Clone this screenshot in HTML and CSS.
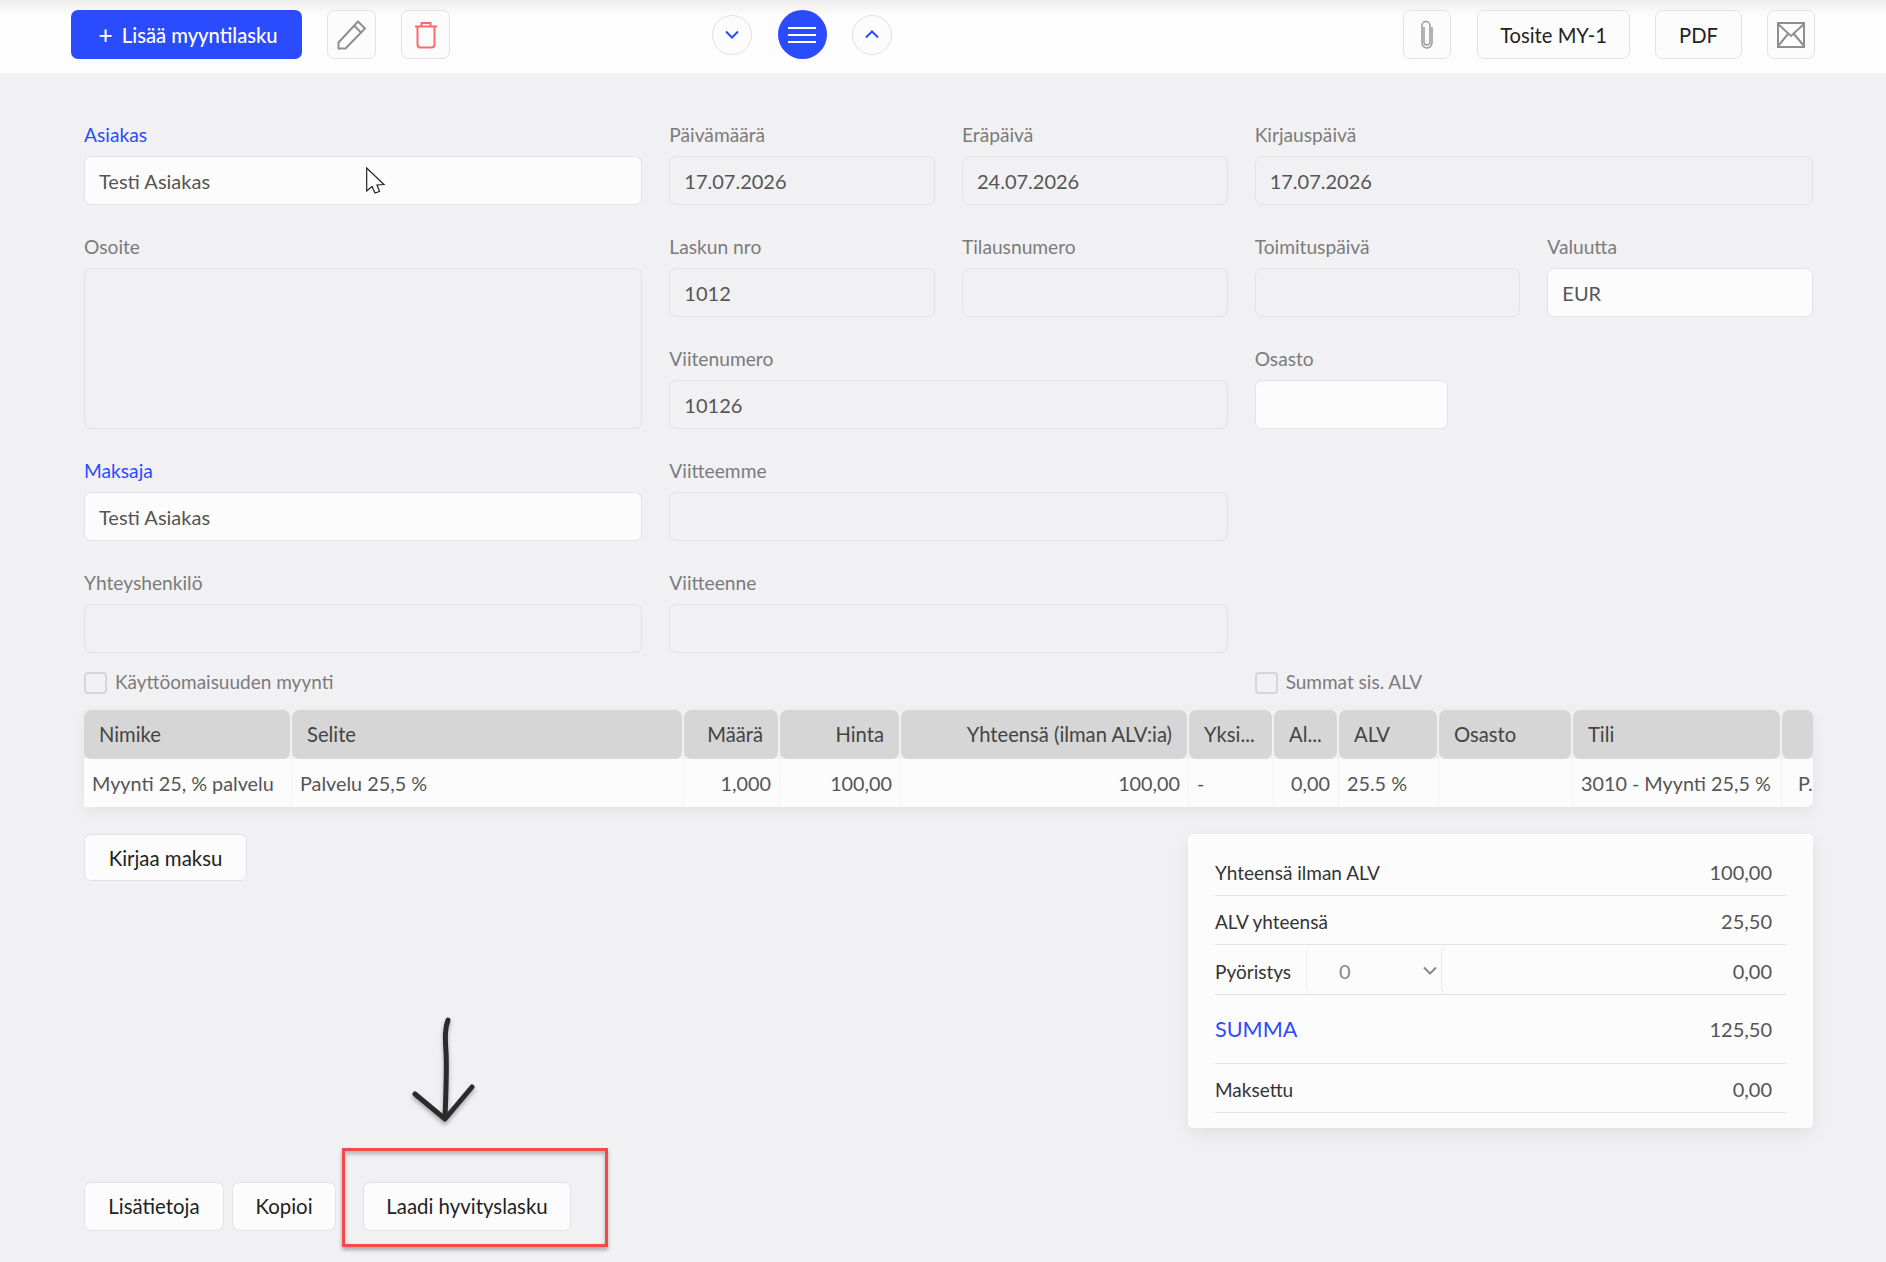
FILE: index.html
```html
<!DOCTYPE html>
<html lang="fi">
<head>
    <meta charset="UTF-8">
    <meta name="viewport" content="width=device-width, initial-scale=1.0">
    <title>Myyntilasku</title>
    <link rel="stylesheet" href="styles.css">
</head>
<body>
    <header class="topbar">
        <button class="btn btn-primary"><span class="plus">+</span> Lisää myyntilasku</button>
        <button class="btn btn-icon edit-btn">
            <svg width="30" height="30" viewBox="0 0 30 30" fill="none" stroke="#8e8e8e" stroke-width="2"><path d="M1.500 28.500v-6l19.500-21 7 7-19.500 20z"/><path d="M17 5.500l7 7"/></svg>
        </button>
        <button class="btn btn-icon delete-btn">
            <svg width="24" height="30" viewBox="0 0 24 30" fill="none" stroke="#f96a6a" stroke-width="2"><path d="M1 6.500h22"/><path d="M7.500 6.500V3h9v3.500"/><path d="M3.500 6.500v18a3 3 0 0 0 3 3h11a3 3 0 0 0 3-3v-18"/></svg>
        </button>

        <div class="pager">
            <button class="circle">
                <svg width="14" height="9" viewBox="0 0 14 9" fill="none" stroke="#2b4bff" stroke-width="2"><path d="M1 1.500l6 6 6-6"/></svg>
            </button>
            <button class="circle circle-main">
                <svg width="28" height="18" viewBox="0 0 28 18" fill="none" stroke="#fff" stroke-width="2"><path d="M0 2h28M0 9h28M0 16h28"/></svg>
            </button>
            <button class="circle">
                <svg width="14" height="9" viewBox="0 0 14 9" fill="none" stroke="#2b4bff" stroke-width="2"><path d="M1 7.500l6-6 6 6"/></svg>
            </button>
        </div>

        <div class="topbar-right">
            <button class="btn btn-clip">
                <svg width="16" height="30" viewBox="0 0 16 30" fill="none" stroke="#999" stroke-width="1.500"><path d="M5 7v15a3 3 0 0 0 6 0V5.500a4 4 0 0 0-8 0V23a5 5 0 0 0 10 0V7"/></svg>
            </button>
            <button class="btn btn-tosite">Tosite MY-1</button>
            <button class="btn btn-pdf">PDF</button>
            <button class="btn btn-clip">
                <svg width="28" height="26" viewBox="0 0 28 26" fill="none" stroke="#8e8e8e" stroke-width="2"><rect x="1" y="1" width="26" height="24"/><path d="M1 2l13 12L27 2M1 24l10-12M27 24L17 12"/></svg>
            </button>
        </div>
    </header>

    <main class="content">
        <div class="form-grid">
            <div class="field span-2">
                <label class="link-label">Asiakas</label>
                <div class="input">Testi Asiakas</div>
            </div>
            <div class="field">
                <label>Päivämäärä</label>
                <div class="input readonly">17.07.2026</div>
            </div>
            <div class="field">
                <label>Eräpäivä</label>
                <div class="input readonly">24.07.2026</div>
            </div>
            <div class="field span-2">
                <label>Kirjauspäivä</label>
                <div class="input readonly">17.07.2026</div>
            </div>

            <div class="field span-2 tall">
                <label>Osoite</label>
                <div class="input readonly"></div>
            </div>
            <div class="field">
                <label>Laskun nro</label>
                <div class="input readonly">1012</div>
            </div>
            <div class="field">
                <label>Tilausnumero</label>
                <div class="input readonly"></div>
            </div>
            <div class="field">
                <label>Toimituspäivä</label>
                <div class="input readonly"></div>
            </div>
            <div class="field">
                <label>Valuutta</label>
                <div class="input">EUR</div>
            </div>

            <div class="field span-2">
                <label>Viitenumero</label>
                <div class="input readonly">10126</div>
            </div>
            <div class="field span-2">
                <label>Osasto</label>
                <div class="input input-narrow"></div>
            </div>

            <div class="field span-2">
                <label class="link-label">Maksaja</label>
                <div class="input">Testi Asiakas</div>
            </div>
            <div class="field span-2">
                <label>Viitteemme</label>
                <div class="input readonly"></div>
            </div>
            <div class="field span-2 row-start">
                <label>Yhteyshenkilö</label>
                <div class="input readonly"></div>
            </div>
            <div class="field span-2">
                <label>Viitteenne</label>
                <div class="input readonly"></div>
            </div>
        </div>

        <div class="check-row">
            <div class="check span-4"><span class="checkbox"></span> Käyttöomaisuuden myynti</div>
            <div class="check span-2"><span class="checkbox"></span> Summat sis. ALV</div>
        </div>

        <div class="lines">
            <div class="th">Nimike</div>
            <div class="th">Selite</div>
            <div class="th right">Määrä</div>
            <div class="th right">Hinta</div>
            <div class="th right">Yhteensä (ilman ALV:ia)</div>
            <div class="th">Yksi...</div>
            <div class="th">Al...</div>
            <div class="th">ALV</div>
            <div class="th">Osasto</div>
            <div class="th">Tili</div>
            <div class="th"></div>

            <div class="td">Myynti 25, % palvelu</div>
            <div class="td">Palvelu 25,5 %</div>
            <div class="td right">1,000</div>
            <div class="td right">100,00</div>
            <div class="td right">100,00</div>
            <div class="td">-</div>
            <div class="td right">0,00</div>
            <div class="td">25.5 %</div>
            <div class="td"></div>
            <div class="td">3010 - Myynti 25,5 %</div>
            <div class="td td-last">P.</div>
        </div>

        <div class="lower">
            <button class="btn btn-payment">Kirjaa maksu</button>
            <div class="totals">
                <div class="total-row"><span>Yhteensä ilman ALV</span><span class="amount">100,00</span></div>
                <div class="total-row"><span>ALV yhteensä</span><span class="amount">25,50</span></div>
                <div class="total-row rounding">
                    <span class="rounding-label">Pyöristys</span>
                    <div class="rounding-select">0
                        <svg width="14" height="9" viewBox="0 0 14 9" fill="none" stroke="#888" stroke-width="2"><path d="M1 1.500l6 6 6-6"/></svg>
                    </div>
                    <div class="rounding-input">0,00</div>
                </div>
                <div class="total-row sum-row"><span class="sum-label">SUMMA</span><span class="amount">125,50</span></div>
                <div class="total-row"><span>Maksettu</span><span class="amount">0,00</span></div>
            </div>
        </div>

        <div class="actions">
            <button class="btn btn-info">Lisätietoja</button>
            <button class="btn btn-copy">Kopioi</button>
            <button class="btn btn-credit">Laadi hyvityslasku</button>
        </div>
    </main>

    <!-- annotations drawn on top of the screenshot -->
    <svg class="cursor" width="20" height="28" viewBox="0 0 20 28"><path d="M.7 1v23l5.300-4.500 3 6.500 4.500-1.500-2.500-6.500 7-.5z" fill="#fff" stroke="#222" stroke-width="1.200"/></svg>
    <svg class="hand-arrow" width="70" height="110" viewBox="0 0 70 110" fill="none" stroke="#2b2b2b" stroke-width="5" stroke-linecap="round" stroke-linejoin="round"><path d="M38 4c-3 8-3 16-2 32s0 40-1 66"/><path d="M5 78l30 25 27-32"/></svg>
    <div class="red-box"></div>
</body>
</html>
```
FILE: styles.css
```css
* {
    margin: 0;
    padding: 0;
    box-sizing: border-box;
    font-family: 'Lato', sans-serif;
}

:root {
    --blue: #2b4bff;
    --page: #f1f1f4;
    --line: #e1e1e7;
    --white: #fcfcfc;
}

body {
    background-color: var(--page);
    color: #333;
    font-size: 20px;
    height: 1262px;
    overflow: hidden;
    position: relative;
}

.btn {
    height: 49px;
    background-color: var(--white);
    border: 1.500px solid var(--line);
    border-radius: 7px;
    color: #222;
    font-size: 20.4px;
    display: inline-flex;
    align-items: center;
    justify-content: center;
}

/* top bar */
.topbar {
    height: 73px;
    padding: 10px 71px 0;
    display: flex;
    align-items: flex-start;
    background-color: #fdfdfd;
    background-image: linear-gradient(#eeeeee, #fdfdfd 16px);
}

.btn-primary {
    width: 231px;
    padding-left: 3px;
    background-color: var(--blue);
    border: none;
    color: #fff;
    font-size: 20.2px;
    font-weight: 500;
}

.plus {
    font-size: 25px;
    font-weight: 400;
    line-height: 1;
    margin-right: 9px;
}

.btn-icon {
    width: 49px;
    margin-left: 25px;
}

.pager {
    display: flex;
    align-items: center;
    gap: 25.500px;
    margin-left: 262px;
}

.circle {
    width: 40px;
    height: 40px;
    background-color: var(--white);
    border: 1.500px solid var(--line);
    border-radius: 50%;
    display: flex;
    align-items: center;
    justify-content: center;
}

.circle-main {
    width: 49px;
    height: 49px;
    background-color: var(--blue);
    border: none;
}

.topbar-right {
    margin-left: auto;
    display: flex;
    gap: 25px;
}

.btn-clip {
    width: 48px;
}

.btn-tosite {
    width: 153px;
    margin-left: 1px;
    font-size: 20.2px;
}

.btn-pdf {
    width: 87px;
    font-size: 20.2px;
}

/* form */
.content {
    padding: 49px 73px 0 84px;
}

.form-grid,
.check-row {
    display: grid;
    grid-template-columns: repeat(6, 1fr);
    column-gap: 27px;
}

.form-grid {
    row-gap: 29px;
}

.span-2 {
    grid-column: span 2;
}

.span-4 {
    grid-column: span 4;
}

.row-start {
    grid-column: 1 / span 2;
}

.tall {
    grid-row: span 2;
    display: flex;
    flex-direction: column;
}

.tall .input {
    flex: 1;
}

.field label {
    display: block;
    height: 26px;
    line-height: 25px;
    margin-bottom: 8px;
    color: #7b7b7b;
    font-size: 19.2px;
}

.field .link-label {
    color: var(--blue);
}

.input {
    height: 49px;
    padding: 0 14px;
    line-height: 49px;
    background-color: var(--white);
    border: 1.500px solid var(--line);
    border-radius: 7px;
    color: #555;
}

.input.readonly {
    background-color: var(--page);
}

.input-narrow {
    width: 193px;
}

.check-row {
    margin-top: 19px;
}

.check {
    display: flex;
    align-items: flex-start;
    gap: 8px;
    height: 21px;
    line-height: 19px;
    color: #7b7b7b;
    font-size: 19px;
}

.checkbox {
    width: 23px;
    height: 22px;
    flex: none;
    border: 2px solid #d5d5da;
    border-radius: 4px;
}

/* invoice lines */
.lines {
    margin-top: 17px;
    display: grid;
    grid-template-columns: 208px 392px 96px 121px 288px 85px 65px 100px 134px 209px 31px;
    grid-template-rows: 49px 48px;
    border-radius: 7px;
    box-shadow: 0 5px 16px rgba(0, 0, 0, 0.06);
}

.th {
    background-color: #d6d6d6;
    border-radius: 7px;
    margin-right: 2px;
    padding: 0 15px;
    line-height: 49px;
    color: #444;
    font-size: 20.2px;
    white-space: nowrap;
    overflow: hidden;
}

.th:nth-child(11) {
    margin-right: 0;
}

.td {
    background-color: var(--white);
    border-right: 1px solid #f3f3f5;
    padding: 0 8px;
    line-height: 48px;
    color: #555;
    font-size: 19.8px;
    white-space: nowrap;
    overflow: hidden;
}

.td-last {
    border-right: none;
    border-radius: 0 0 7px 0;
    padding: 0 0 0 16px;
}

.right {
    text-align: right;
}

/* lower part */
.lower {
    margin-top: 27px;
    display: flex;
    justify-content: space-between;
    align-items: flex-start;
}

.btn-payment {
    width: 163px;
    height: 47px;
}

.totals {
    width: 625px;
    height: 294px;
    padding: 13px 27px 0;
    background-color: var(--white);
    border-radius: 5px;
    box-shadow: 0 6px 18px rgba(0, 0, 0, 0.07);
    font-size: 19px;
}

.total-row {
    height: 49px;
    padding: 2px 14px 0 0;
    border-bottom: 1.500px solid var(--line);
    display: flex;
    align-items: center;
    justify-content: space-between;
    color: #333;
}

.amount {
    color: #555;
    font-size: 20px;
}

.rounding {
    height: 50px;
    padding: 0;
}

.rounding-label {
    padding-top: 3px;
}

.rounding-select {
    width: 135px;
    height: 100%;
    margin-left: 15px;
    padding: 2px 4px 0 32px;
    border-left: 1px solid #efeff2;
    border-radius: 7px 0 0 7px;
    color: #888;
    font-size: 20px;
    display: flex;
    align-items: center;
    justify-content: space-between;
}

.rounding-input {
    flex: 1;
    height: 100%;
    padding: 2px 14px 0 0;
    border-left: 1px solid #e8e8ec;
    border-radius: 7px 0 0 7px;
    color: #555;
    font-size: 20px;
    display: flex;
    align-items: center;
    justify-content: flex-end;
}

.sum-row {
    height: 69px;
    padding-top: 0;
}

.sum-label {
    color: var(--blue);
    font-size: 21.6px;
}

.actions {
    margin-top: 54px;
    display: flex;
    gap: 8px;
}

.actions .btn {
    padding-bottom: 2px;
}

.btn-info {
    width: 140px;
}

.btn-copy {
    width: 104px;
}

.btn-credit {
    width: 208px;
    margin-left: 19px;
}

/* annotations */
.cursor {
    position: absolute;
    left: 366px;
    top: 167px;
}

.hand-arrow {
    position: absolute;
    left: 410px;
    top: 1016px;
    filter: drop-shadow(0 3px 2px rgba(0, 0, 0, 0.3));
}

.red-box {
    position: absolute;
    left: 342px;
    top: 1148px;
    width: 266px;
    height: 99px;
    border: 3px solid #f44949;
    box-shadow: 0 3px 4px rgba(0, 0, 0, 0.3), inset 0 3px 4px rgba(0, 0, 0, 0.25);
}
```
